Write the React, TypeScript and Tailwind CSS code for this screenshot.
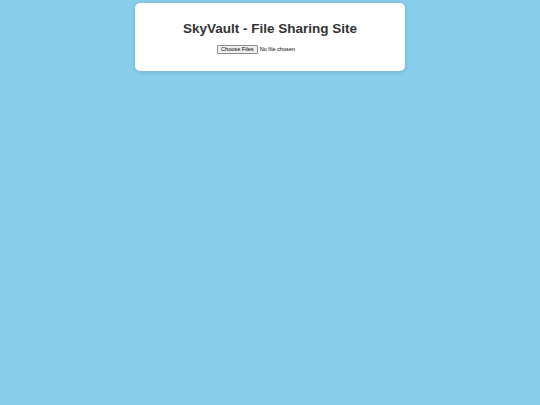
export default function App() {
  return (
    <div
      className="min-h-[405px] w-full bg-[#87ceeb] pt-[3px]"
      style={{ fontFamily: '"Liberation Sans", Arial, sans-serif' }}
    >
      <div className="mx-auto flex h-[68px] w-[270px] flex-col items-center rounded-[5px] bg-white pt-[18px] shadow-[0_1px_4px_rgba(0,0,0,0.15)]">
        <h1 className="text-[13.5px] font-bold leading-[16px] text-[#333333]">
          SkyVault - File Sharing Site
        </h1>
        <div className="mt-[8px] flex w-[106px] items-center gap-[2px] text-[5.6px] leading-none text-black">
          <button className="h-[9px] rounded-[1px] border border-[#8f8f8f] bg-[#efefef] px-[3px] leading-none">
            Choose Files
          </button>
          <span>No file chosen</span>
        </div>
      </div>
    </div>
  );
}
